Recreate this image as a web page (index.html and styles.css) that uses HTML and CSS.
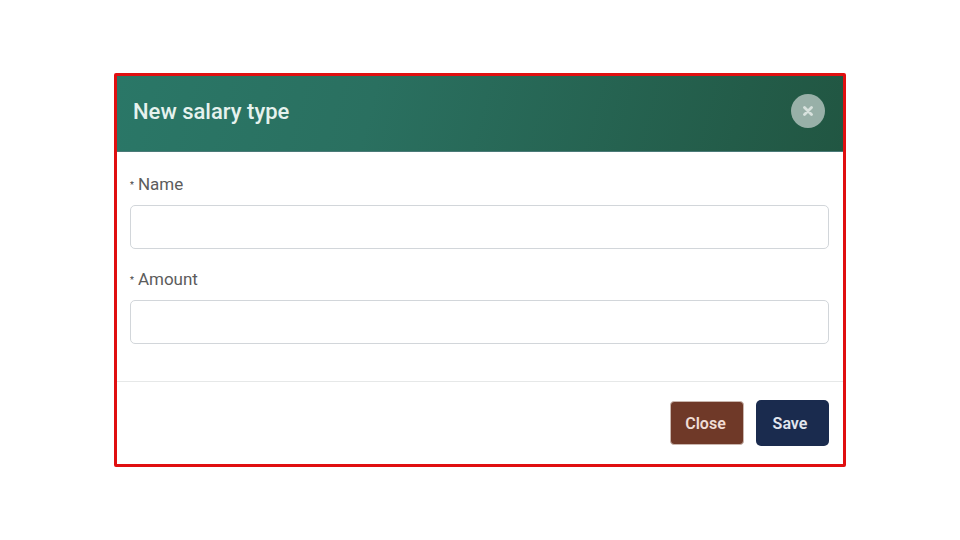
FILE: index.html
```html
<!DOCTYPE html>
<html>
	<head>
		<meta charset="UTF-8">
		<title>New salary type</title>
		<link rel="stylesheet" href="styles.css">
	</head>
	<body>
		<div class="modal">
			<div class="modal-head">
				<h2>New salary type</h2>
				<span class="close-x">
					<svg width="10" height="10" viewBox="0 0 10 10"><path d="M1.5 1.5L8.500 8.500M8.500 1.500L1.500 8.500" stroke="#d8e2de" stroke-width="2.800" stroke-linecap="round"/></svg>
				</span>
			</div>
			<div class="modal-body">
				<div class="field">
					<label><i>*</i>Name</label>
					<input type="text">
				</div>
				<div class="field">
					<label><i>*</i>Amount</label>
					<input type="text">
				</div>
			</div>
			<div class="modal-foot">
				<button class="btn btn-close">Close</button>
				<button class="btn btn-save">Save</button>
			</div>
		</div>
	</body>
</html>
```

FILE: styles.css
```css
*{
	padding:0;
	margin:0;
	box-sizing:border-box;
}
body{
	background:#fff;
	padding:73px 114px 0;
	font-family:Roboto,"Liberation Sans",sans-serif;
}
.modal{
	width:732px;
	height:394px;
	border:3px solid #e00f10;
	border-radius:2px;
	background:#fff;
}
.modal-head{
	height:76px;
	padding:0 18px 6px 16px;
	display:flex;
	align-items:center;
	justify-content:space-between;
	background:linear-gradient(105deg,#2a7767 0%,#2a7060 35%,#215642 100%);
	border-bottom:1px solid #4a7a78;
}
.modal-head h2{
	font-size:22px;
	font-weight:500;
	color:#e6f2ee;
	margin-top:2px;
}
.close-x{
	width:34px;
	height:34px;
	border-radius:50%;
	background:#98b0a8;
	display:flex;
	align-items:center;
	justify-content:center;
}
.modal-body{
	height:230px;
	padding:23px 14px 0 13px;
	border-bottom:1px solid #e6e8e8;
}
.field{
	margin-bottom:21px;
}
.field label{
	display:block;
	height:30px;
	font-size:17px;
	line-height:18px;
	color:#5c5c5c;
}
.field label i{
	font-style:normal;
	color:#444;
	font-size:9px;
	margin-right:4px;
	vertical-align:2px;
}
.field input{
	display:block;
	width:100%;
	height:44px;
	border:1px solid #d2d6da;
	border-radius:5px;
	background:#fff;
}
.modal-foot{
	display:flex;
	justify-content:flex-end;
	align-items:center;
	gap:12px;
	padding:18px 14px 0 0;
}
.btn{
	font-family:Roboto,"Liberation Sans",sans-serif;
	font-size:16px;
	font-weight:600;
	border:0;
	cursor:pointer;
}
.btn-close{
	width:74px;
	height:44px;
	padding-right:3px;
	border-radius:4px;
	background:#6f3928;
	color:#f0dcd4;
	border:1px solid #c9b6ae;
}
.btn-save{
	width:73px;
	height:46px;
	padding-right:5px;
	border-radius:5px;
	background:#1a2b4e;
	color:#e2e6ee;
}
```
